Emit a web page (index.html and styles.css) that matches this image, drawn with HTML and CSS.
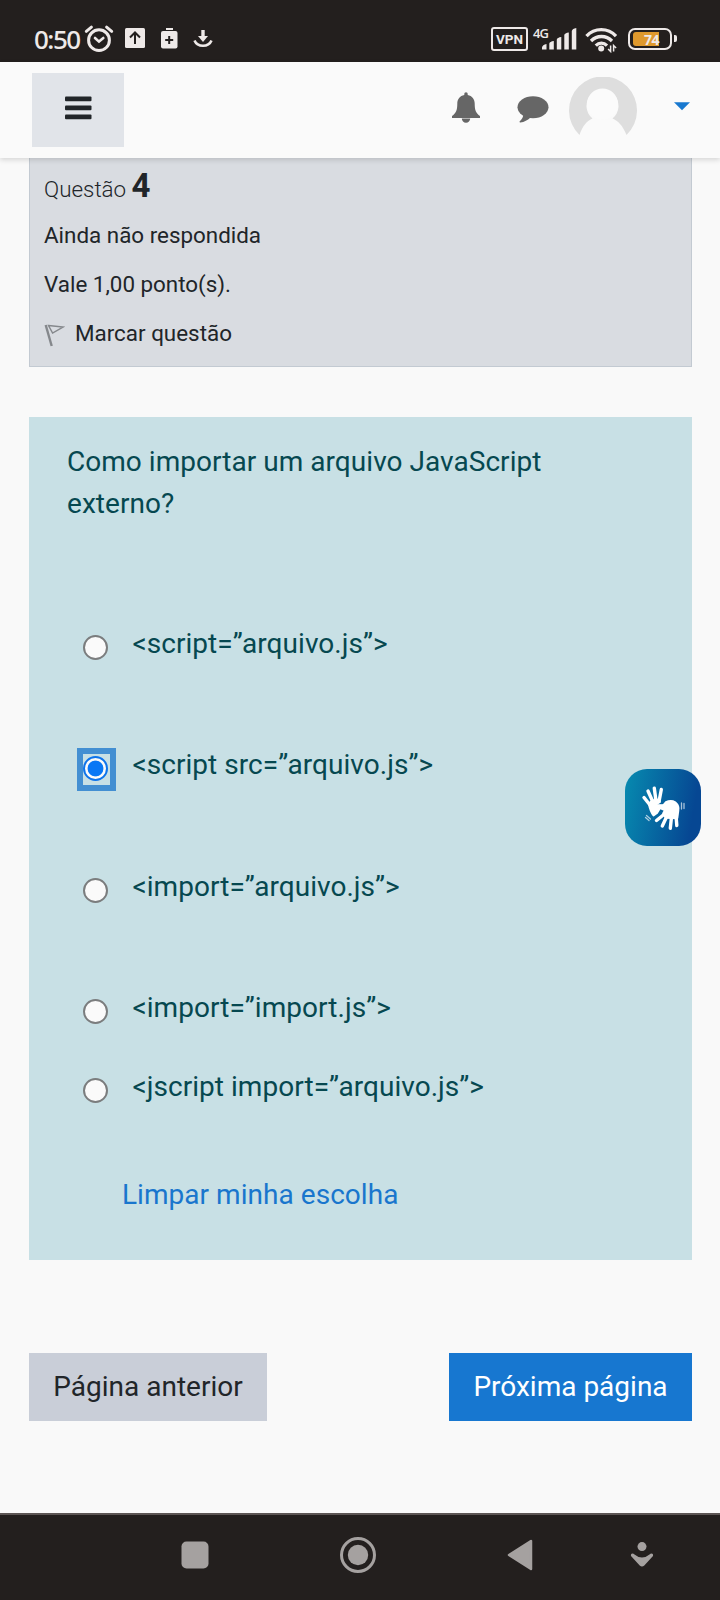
FILE: index.html
```html
<!DOCTYPE html>
<html lang="pt-BR">
<head>
<meta charset="utf-8">
<title>Questionário</title>
<link rel="stylesheet" href="styles.css">
</head>
<body>
<div class="screen">
  <div class="status">
    <span class="clock">0:50</span>
    <svg class="ic-alarm" width="30" height="28" viewBox="0 0 30 28" fill="none" stroke="#eee9e8" stroke-linecap="round">
      <circle cx="15" cy="15.2" r="10.4" stroke-width="3"/>
      <path d="M2.3 6.3 7.4 2.2M27.7 6.3 22.6 2.2" stroke-width="3"/>
      <path d="m11 13 4 3.6 4.3-3.6" stroke-width="2.6"/>
    </svg>
    <svg class="ic-up" width="20" height="20" viewBox="0 0 20 20">
      <rect width="20" height="20" rx="1.5" fill="#eee9e8"/>
      <path d="M10 16V5M5 9.5l5-5 5 5" fill="none" stroke="#231f1e" stroke-width="2"/>
    </svg>
    <svg class="ic-plus" width="17" height="21" viewBox="0 0 17 21">
      <rect x="5" y="0" width="7" height="2" fill="#eee9e8"/>
      <rect y="3" width="16.5" height="17.5" rx="2" fill="#eee9e8"/>
      <path d="M8.2 8v8M4.2 12h8" stroke="#231f1e" stroke-width="2"/>
    </svg>
    <svg class="ic-down" width="20" height="18" viewBox="0 0 20 18">
      <path d="M10 0v7" stroke="#eee9e8" stroke-width="3.4"/>
      <path d="M5 6h10l-5 6z" fill="#eee9e8"/>
      <path d="M1.500 10.500c3 7 14 7 17 0" fill="none" stroke="#eee9e8" stroke-width="2.600"/>
    </svg>
    <span class="spacer"></span>
    <span class="vpn">VPN</span>
    <span class="cell">
      <span class="net">4G</span>
      <svg width="35" height="22" viewBox="0 0 35 22" fill="#eee9e8">
        <path d="M0 21.500v-2q.500-3 4.500-3.500v5.500zM7.300 21.500v-6q.500-2 4.500-2.500v8.500zM14.800 21.500v-10q.500-2 4.500-2.500v12.500zM22.300 21.500v-14.500q.500-2 4.500-2.500v17zM29.800 21.500V3q.500-2.500 4.500-3v21.500z"/>
      </svg>
    </span>
    <svg class="ic-wifi" width="33" height="26" viewBox="0 0 33 26" fill="none" stroke="#eee9e8" stroke-width="3.300">
      <path d="M1.500 9.200c8-8.700 21.500-8.700 29.500 0M6 14c6-6 15-6 21 0M10.800 18.600c3.200-3.200 8-3.200 11.200 0"/>
      <circle cx="16.200" cy="21.600" r="3" fill="#eee9e8" stroke="none"/>
      <path d="M25.600 18.500v6l-2.500-2.500M28.600 24.500v-6l2.500 2.500" stroke-width="1.500"/>
    </svg>
    <span class="battery"><span class="level">74</span></span>
    <span class="nub"></span>
  </div>

  <header class="navbar">
    <div class="menu">
      <svg width="27" height="24" viewBox="0 0 27 24" fill="#212529">
        <rect y="0.500" width="26.500" height="4.800" rx="1"/><rect y="9.500" width="26.500" height="4.800" rx="1"/><rect y="18.400" width="26.500" height="4.800" rx="1"/>
      </svg>
    </div>
    <svg class="bell" width="28" height="31" viewBox="0 0 28 31" fill="#666">
      <path d="M12.300 2.900V1.800q0-1.500 1.700-1.500t1.700 1.500v1.100c4.500.8 7 4.300 7 8.600 0 7 1.300 9.500 5.300 12.500v2H0v-2c4-3 5.300-5.500 5.300-12.500 0-4.300 2.500-7.800 7-8.600z"/>
      <path d="M9.800 26.500h8.400a4.200 4.200 0 0 1-8.400 0z"/>
    </svg>
    <svg class="chat" width="32" height="27" viewBox="0 0 32 27" fill="#666">
      <ellipse cx="16" cy="11.300" rx="15.500" ry="11"/>
      <path d="M6.500 17c0 4-1.600 6.300-3.900 8.600-.3.600 0 1 .7.900 4.200-.6 7.300-2.300 10-4.800z"/>
    </svg>
    <svg class="avatar" width="68" height="68" viewBox="0 0 68 68">
      <path d="M10.500 58A34 34 0 1 1 57.500 58C54 49 49 43.500 43.500 41.500A16 16 0 1 0 23.500 41.500C18 43.500 13.500 49 10.500 58z" fill="#dedede"/>
      <circle cx="33.500" cy="27" r="15.500" fill="#fbfbfb"/>
    </svg>
    <svg class="caret" width="16" height="9" viewBox="0 0 16 9"><path d="M0 .300h16L8 8.300z" fill="#1878cf"/></svg>
  </header>

  <main class="content">
    <section class="info">
      <p class="number">Questão <b>4</b></p>
      <p>Ainda não respondida</p>
      <p>Vale 1,00 ponto(s).</p>
      <p class="flag">
        <svg width="21" height="23" viewBox="0 0 21 23" fill="none" stroke="#85888c">
          <path d="M1.700 1l6 21" stroke-width="2.400"/><path d="M4.500 1.500l14.500 1.500L8.600 9z" stroke-width="1.400"/>
        </svg><span>Marcar questão</span>
      </p>
    </section>

    <section class="question">
      <p class="prompt">Como importar um arquivo JavaScript externo?</p>
      <div class="options">
        <label class="option"><span class="radio"></span><span>&lt;script=”arquivo.js”&gt;</span></label>
        <label class="option"><span class="radio checked"></span><span>&lt;script src=”arquivo.js”&gt;</span></label>
        <label class="option"><span class="radio"></span><span>&lt;import=”arquivo.js”&gt;</span></label>
        <label class="option tight"><span class="radio"></span><span>&lt;import=”import.js”&gt;</span></label>
        <label class="option"><span class="radio"></span><span>&lt;jscript import=”arquivo.js”&gt;</span></label>
      </div>
      <a class="clear">Limpar minha escolha</a>
    </section>

    <div class="pager">
      <div class="btn prev">Página anterior</div>
      <div class="btn next">Próxima página</div>
    </div>
  </main>

  <nav class="sysnav">
    <svg class="recent" width="28" height="28" viewBox="0 0 28 28"><rect x=".500" y=".500" width="27" height="27" rx="5" fill="#a5a1a0"/></svg>
    <svg class="home" width="38" height="38" viewBox="0 0 38 38"><circle cx="19" cy="19" r="16.500" fill="none" stroke="#a5a1a0" stroke-width="3"/><circle cx="19" cy="19" r="10.200" fill="#a5a1a0"/></svg>
    <svg class="back" width="26" height="32" viewBox="0 0 26 32"><path d="M2 16 24 2v28z" fill="#a5a1a0" stroke="#a5a1a0" stroke-width="2.500" stroke-linejoin="round"/></svg>
    <svg class="hide" width="24" height="26" viewBox="0 0 24 26" fill="#a5a1a0"><circle cx="12" cy="4.600" r="4.500"/><path d="M2.500 11.500q1 0 2 1 3.500 3 7.500 3t7.500-3q1-1 2-1 2 0 1.500 2.500l-8.700 9.500q-2.300 2-4.600 0L1 14q-.500-2.500 1.500-2.500z"/></svg>
  </nav>

  <div class="vlibras">
    <svg width="54" height="54" viewBox="0 0 54 54" fill="none" stroke="#fff" stroke-width="3.400" stroke-linecap="round" stroke-linejoin="round">
      <path d="M14 24 8 16.500M16.500 20 12 10M19.800 18.500 18.300 7.300M23.300 19 25.300 8.500"/>
      <path d="M13 23 16 19.500l7.500-1 .5 2.500-5.500 3.500 1.500 2.500h4l-3 5-3.500 2.500q-3-4-4.500-11z" fill="#fff" stroke-width="2"/>
      <path d="M28.500 33 20.500 39.500M31 35 26.300 45M35.500 36 34.300 47.200M40 34 40.800 44.500"/>
      <path d="M20 25h7l3-3.500q5-2.500 9 0 4 3.500 3 8L41 37l-11-.5-2.500-4 2-3.500z" fill="#fff" stroke-width="2.600"/>
      <path d="M20 24.800h8" stroke-width="3"/>
      <path d="M45.500 22v6M48 22.500v5M10.500 34.500l4 3.500M9.500 36.500l3.500 3" stroke-width="1.300" opacity=".65"/>
    </svg>
  </div>
</div>
</body>
</html>
```
FILE: styles.css
```css
*, *::after { box-sizing: border-box; }
body { margin: 0; font-family: Roboto, sans-serif; color: #212529; background: #f9f9f9; }
svg { display: block; flex: none; }
p { margin: 0; }

.screen { position: relative; width: 720px; height: 1600px; display: flex; flex-direction: column; overflow: hidden; }

.status { flex: none; height: 62px; background: #231f1e; color: #eee9e8; display: flex; align-items: flex-start; padding: 25px 43px 0 34px; }
.clock { width: 50px; font: 500 26px/29px "Noto Sans", sans-serif; letter-spacing: -1.5px; white-space: nowrap; }
.ic-up { margin: 3px 0 0 11px; }
.ic-plus { margin: 3px 0 0 16px; }
.ic-down { margin: 5px 0 0 15px; }
.spacer { flex: 1; }
.vpn { width: 37px; height: 24px; margin-top: 2px; border: 2.5px solid #eee9e8; border-radius: 3px; font: bold 13.5px/20px Roboto, sans-serif; text-align: center; }
.cell { width: 44px; height: 26px; margin: 2px 0 0 5px; display: grid; }
.cell > * { grid-area: 1 / 1; }
.cell svg { justify-self: end; margin-top: 1px; }
.net { font: 600 13px/12px "Open Sans", sans-serif; letter-spacing: -1px; }
.ic-wifi { margin: 2px 0 0 8px; }
.battery { width: 44px; height: 22px; margin: 3px 0 0 10px; border: 2px solid #eee9e8; border-radius: 7px; padding: 2px 3px; }
.level { display: block; width: 26px; height: 14px; border-radius: 3px 0 0 3px; background: #df992d; font: bold 14px/15px "Open Sans", sans-serif; letter-spacing: -.5px; text-align: right; }
.nub { width: 3px; height: 7px; margin: 10px 0 0 2px; border-radius: 0 2px 2px 0; background: #eee9e8; }

.navbar { flex: none; position: relative; z-index: 1; height: 96px; background: #fafafa; display: flex; align-items: flex-start; padding: 11px 30px 0 32px; box-shadow: 0 2px 5px rgba(0, 0, 0, .14); }
.menu { width: 92px; height: 74px; margin-right: auto; background: #e1e4e9; display: flex; align-items: center; justify-content: center; padding-bottom: 4px; }
.bell { margin: 19px 37px 0 0; }
.chat { margin: 23px 20px 0 0; }
.avatar { margin-top: 4px; }
.caret { margin: 29px 0 0 37px; }

.content { flex: 1; padding: 0 28px 0 29px; }
.info { height: 209px; padding: 13px 0 0 14px; background: #d9dce1; border: 1px solid #c3cad2; border-top: 0; font-size: 22.4px; line-height: 33px; display: flex; flex-direction: column; gap: 16px; }
.number { height: 37px; margin-bottom: -5px; font-weight: 300; line-height: 37px; }
.number b { font-size: 33px; line-height: 30px; font-weight: 700; }
.flag { display: flex; gap: 10px; }
.flag svg { margin: 7px 0 0 0; }

.question { height: 843px; margin-top: 50px; padding: 24px 100px 0 38px; background: #c8e0e5; color: #064850; font-size: 28px; letter-spacing: .04px; line-height: 42px; }
.options { display: flex; flex-direction: column; gap: 79.3px; padding: 98px 0 0 15.5px; }
.option { display: flex; height: 42px; gap: 25px; white-space: nowrap; }
.tight { margin-bottom: -42px; }
.radio { width: 25px; height: 25px; margin-top: 12px; border: 2px solid #7b7d7e; border-radius: 50%; background: #fafafa; }
.checked { border-color: #0d74ec; background: radial-gradient(circle, #0877f5 0 7.5px, #fafafa 8.3px); position: relative; }
.checked::after { content: ""; position: absolute; left: -8px; top: -10px; width: 39px; height: 43px; border: 6px solid #438fd2; }
.clear { display: block; margin: 66px 0 0 55px; color: #1976cd; letter-spacing: 0.04px; white-space: nowrap; }

.pager { display: flex; justify-content: space-between; margin-top: 93px; }
.btn { height: 68px; font-size: 28px; line-height: 67px; text-align: center; white-space: nowrap; }
.prev { width: 238px; background: #c9ced8; }
.next { width: 243px; background: #1777d0; color: #fff; }

.sysnav { flex: none; height: 87px; background: #231f1e; border-top: 2px solid #5c5554; display: flex; align-items: center; padding: 0 66px 6px 181px; }
.home { margin-left: 130px; }
.back { margin-left: 130px; }
.hide { margin-left: auto; }

.vlibras { position: absolute; left: 625px; top: 769px; width: 76px; height: 77px; border-radius: 22px; background: linear-gradient(100deg, #078bb0, #064793 85%); display: flex; align-items: center; justify-content: center; }
```
